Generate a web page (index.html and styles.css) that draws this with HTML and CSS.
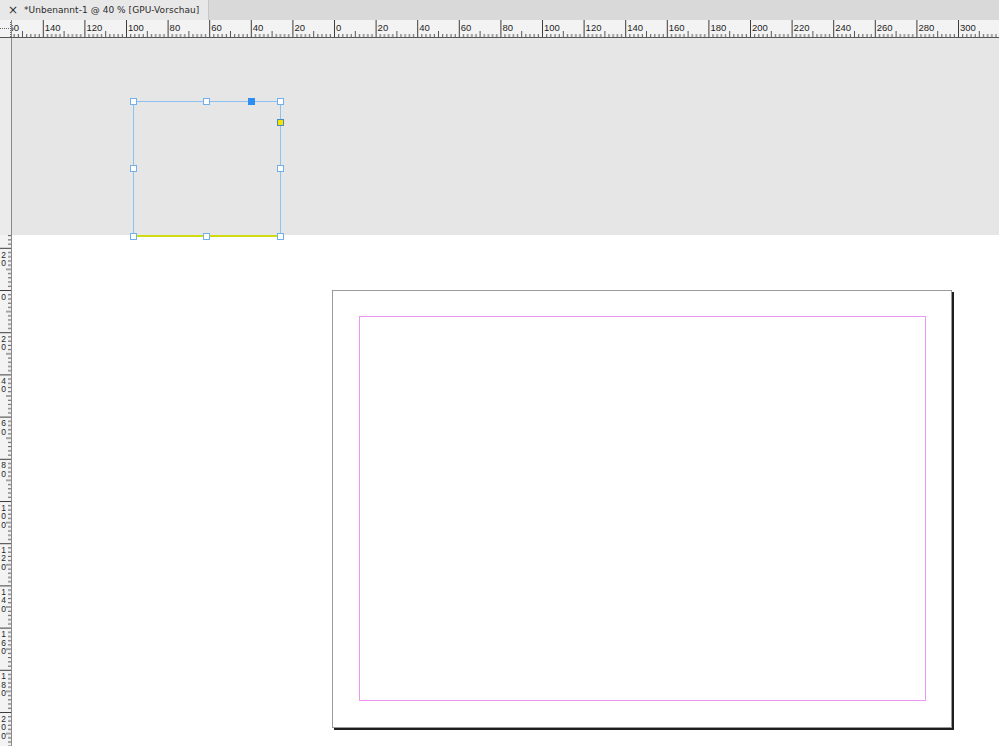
FILE: index.html
```html
<!DOCTYPE html>
<html lang="de">
<head>
<meta charset="utf-8">
<title>Unbenannt-1</title>
<link rel="stylesheet" href="styles.css">
</head>
<body>
<div class="app">
  <div class="tabbar">
    <div class="tab">
      <span class="tab-close">×</span>
      <span class="tab-title">*Unbenannt-1 @ 40 % [GPU-Vorschau]</span>
    </div>
  </div>

  <div class="hruler">
    <svg class="hruler-svg" width="999" height="17" viewBox="0 0 999 17">
      <defs>
        <pattern id="ht" patternUnits="userSpaceOnUse" x="1.2" y="0" width="41.6" height="17">
          <rect x="0" y="0" width="1" height="17" fill="#3c3c3c"/>
          <rect x="4.16" y="14" width="1" height="3" fill="#555"/>
          <rect x="8.32" y="14" width="1" height="3" fill="#555"/>
          <rect x="12.48" y="14" width="1" height="3" fill="#555"/>
          <rect x="16.64" y="14" width="1" height="3" fill="#555"/>
          <rect x="20.8" y="11" width="1" height="6" fill="#555"/>
          <rect x="24.96" y="14" width="1" height="3" fill="#555"/>
          <rect x="29.12" y="14" width="1" height="3" fill="#555"/>
          <rect x="33.28" y="14" width="1" height="3" fill="#555"/>
          <rect x="37.44" y="14" width="1" height="3" fill="#555"/>
        </pattern>
      </defs>
      <rect x="0" y="0" width="999" height="17" fill="url(#ht)"/>
      <g class="rl">
        <text x="3.2" y="11">160</text>
        <text x="44.8" y="11">140</text>
        <text x="86.4" y="11">120</text>
        <text x="128" y="11">100</text>
        <text x="169.6" y="11">80</text>
        <text x="211.2" y="11">60</text>
        <text x="252.8" y="11">40</text>
        <text x="294.4" y="11">20</text>
        <text x="336" y="11">0</text>
        <text x="377.6" y="11">20</text>
        <text x="419.2" y="11">40</text>
        <text x="460.8" y="11">60</text>
        <text x="502.4" y="11">80</text>
        <text x="544" y="11">100</text>
        <text x="585.6" y="11">120</text>
        <text x="627.2" y="11">140</text>
        <text x="668.8" y="11">160</text>
        <text x="710.4" y="11">180</text>
        <text x="752" y="11">200</text>
        <text x="793.6" y="11">220</text>
        <text x="835.2" y="11">240</text>
        <text x="876.8" y="11">260</text>
        <text x="918.4" y="11">280</text>
        <text x="960" y="11">300</text>
      </g>
      <rect x="0" y="0" width="11" height="17" fill="#f3f3f3"/>
      <line x1="0" y1="8.5" x2="10" y2="8.5" stroke="#666" stroke-width="1" stroke-dasharray="1 1"/>
      <line x1="10.5" y1="2" x2="10.5" y2="17" stroke="#666" stroke-width="1" stroke-dasharray="1 1"/>
      <rect x="11" y="0" width="1" height="17" fill="#8a8a8a"/>
    </svg>
  </div>

  <div class="main">
    <div class="vruler">
      <svg width="11" height="708" viewBox="0 0 11 708">
        <defs>
          <pattern id="vt" patternUnits="userSpaceOnUse" x="0" y="41" width="11" height="42.2">
            <rect x="0" y="0" width="11" height="1" fill="#3c3c3c"/>
            <rect x="8" y="4.22" width="3" height="1" fill="#555"/>
            <rect x="8" y="8.44" width="3" height="1" fill="#555"/>
            <rect x="8" y="12.66" width="3" height="1" fill="#555"/>
            <rect x="8" y="16.88" width="3" height="1" fill="#555"/>
            <rect x="6" y="21.1" width="5" height="1" fill="#555"/>
            <rect x="8" y="25.32" width="3" height="1" fill="#555"/>
            <rect x="8" y="29.54" width="3" height="1" fill="#555"/>
            <rect x="8" y="33.76" width="3" height="1" fill="#555"/>
            <rect x="8" y="37.98" width="3" height="1" fill="#555"/>
          </pattern>
        </defs>
        <rect x="0" y="0" width="11" height="197" fill="#ebebeb"/>
        <rect x="0" y="197" width="11" height="511" fill="#f3f3f3"/>
        <rect x="0" y="197" width="11" height="511" fill="url(#vt)"/>
        <g class="vl">
          <text x="3.5" y="211.5">20</text>
          <text x="3.5" y="253.5">0</text>
          <text x="3.5" y="295.7">20</text>
          <text x="3.5" y="337.9">40</text>
          <text x="3.5" y="380.1">60</text>
          <text x="3.5" y="422.3">80</text>
          <text x="3.5" y="464.5">100</text>
          <text x="3.5" y="506.7">120</text>
          <text x="3.5" y="548.9">140</text>
          <text x="3.5" y="591.1">160</text>
          <text x="3.5" y="633.3">180</text>
          <text x="3.5" y="675.5">200</text>
        </g>
      </svg>
    </div>

    <div class="canvas">
      <div class="pasteboard"></div>

      <div class="page">
        <div class="margin-guide"></div>
      </div>

      <div class="frame">
        <div class="frame-bottom"></div>
        <span class="handle h-tl"></span>
        <span class="handle h-tc"></span>
        <span class="handle h-tr"></span>
        <span class="handle h-ml"></span>
        <span class="handle h-mr"></span>
        <span class="handle h-bl"></span>
        <span class="handle h-bc"></span>
        <span class="handle h-br"></span>
        <span class="handle-blue"></span>
        <span class="handle-yellow"></span>
      </div>
    </div>
  </div>
</div>
</body>
</html>
```

FILE: styles.css
```css
html, body {
  margin: 0;
  padding: 0;
  background: #ffffff;
}

.app {
  width: 999px;
  height: 746px;
  overflow: hidden;
  display: flex;
  flex-direction: column;
  font-family: "DejaVu Sans", "Liberation Sans", sans-serif;
}

.tabbar {
  height: 20px;
  flex: 0 0 20px;
  background: #d9d9d9;
  display: flex;
}

.tab {
  width: 209px;
  height: 20px;
  background: #e8e8e8;
  border-right: 1px solid #c6c6c6;
  display: flex;
  align-items: center;
  box-sizing: border-box;
  padding-left: 8px;
  color: #2b2b2b;
  font-size: 9px;
}

.tab-close {
  font-size: 12px;
  width: 16px;
  color: #333;
  line-height: 1;
}

.tab-title {
  white-space: nowrap;
  letter-spacing: 0.05px;
}

.hruler {
  height: 17px;
  flex: 0 0 17px;
  background: #f3f3f3;
  border-bottom: 1px solid #555;
}

.hruler-svg {
  display: block;
}

.rl text, .vl text {
  font-family: "Liberation Sans", "DejaVu Sans", sans-serif;
  fill: #1e1e1e;
}

.rl text {
  font-size: 9.5px;
}

.vl text {
  font-size: 8.5px;
  writing-mode: vertical-lr;
  text-orientation: upright;
  letter-spacing: -1.5px;
}

.main {
  flex: 1;
  display: flex;
  min-height: 0;
}

.vruler {
  width: 11px;
  flex: 0 0 11px;
  border-right: 1px solid #8a8a8a;
}

.vruler svg {
  display: block;
}

.canvas {
  flex: 1;
  position: relative;
  background: #ffffff;
  overflow: hidden;
}

.pasteboard {
  height: 197px;
  background: #e6e6e6;
}

.page {
  position: absolute;
  left: 320px;
  top: 252px;
  width: 620px;
  height: 438px;
  box-sizing: border-box;
  background: #ffffff;
  border: 1px solid #9a9a9a;
  box-shadow: 2px 2px 0 #1e1e1e;
}

.margin-guide {
  position: absolute;
  left: 26px;
  top: 25px;
  width: 567px;
  height: 385px;
  box-sizing: border-box;
  border: 1px solid #ee96f4;
}

.frame {
  position: absolute;
  left: 121px;
  top: 63px;
  width: 148px;
  height: 136px;
  box-sizing: border-box;
  border: 1px solid #8cc2f2;
}

.frame-bottom {
  position: absolute;
  left: -1px;
  right: -1px;
  bottom: -1px;
  height: 2px;
  background: #d0dc10;
}

.handle {
  position: absolute;
  width: 7px;
  height: 7px;
  box-sizing: border-box;
  background: #ffffff;
  border: 1px solid #72b0ec;
}

.h-tl { left: -4px;  top: -4px; }
.h-tc { left: 69px;  top: -4px; }
.h-tr { left: 143px; top: -4px; }
.h-ml { left: -4px;  top: 63px; }
.h-mr { left: 143px; top: 63px; }
.h-bl { left: -4px;  top: 131px; }
.h-bc { left: 69px;  top: 131px; }
.h-br { left: 143px; top: 131px; }

.handle-blue {
  position: absolute;
  left: 114px;
  top: -4px;
  width: 7px;
  height: 7px;
  background: #2f8ef2;
}

.handle-yellow {
  position: absolute;
  left: 143px;
  top: 17px;
  width: 7px;
  height: 7px;
  box-sizing: border-box;
  background: #f0e400;
  border: 1px solid #4d88bf;
}
```
